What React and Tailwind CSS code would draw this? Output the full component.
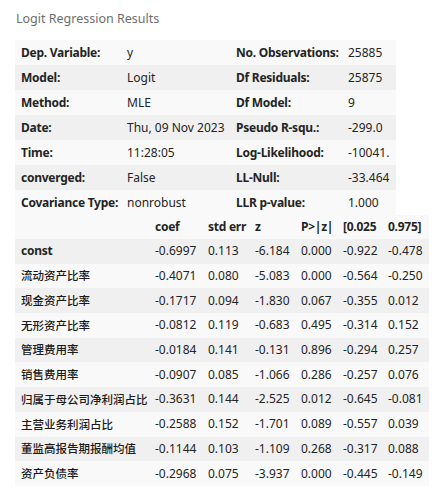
const summary = [
  ["Dep. Variable:", "y", "No. Observations:", "25885"],
  ["Model:", "Logit", "Df Residuals:", "25875"],
  ["Method:", "MLE", "Df Model:", "9"],
  ["Date:", "Thu, 09 Nov 2023", "Pseudo R-squ.:", "-299.0"],
  ["Time:", "11:28:05", "Log-Likelihood:", "-10041."],
  ["converged:", "False", "LL-Null:", "-33.464"],
  ["Covariance Type:", "nonrobust", "LLR p-value:", "1.000"],
];

const coefs = [
  ["const", "-0.6997", "0.113", "-6.184", "0.000", "-0.922", "-0.478"],
  ["流动资产比率", "-0.4071", "0.080", "-5.083", "0.000", "-0.564", "-0.250"],
  ["现金资产比率", "-0.1717", "0.094", "-1.830", "0.067", "-0.355", "0.012"],
  ["无形资产比率", "-0.0812", "0.119", "-0.683", "0.495", "-0.314", "0.152"],
  ["管理费用率", "-0.0184", "0.141", "-0.131", "0.896", "-0.294", "0.257"],
  ["销售费用率", "-0.0907", "0.085", "-1.066", "0.286", "-0.257", "0.076"],
  ["归属于母公司净利润占比", "-0.3631", "0.144", "-2.525", "0.012", "-0.645", "-0.081"],
  ["主营业务利润占比", "-0.2588", "0.152", "-1.701", "0.089", "-0.557", "0.039"],
  ["董监高报告期报酬均值", "-0.1144", "0.103", "-1.109", "0.268", "-0.317", "0.088"],
  ["资产负债率", "-0.2968", "0.075", "-3.937", "0.000", "-0.445", "-0.149"],
];

const headers = ["", "coef", "std err", "z", "P>|z|", "[0.025", "0.975]"];

export default function App() {
  return (
    <div
      className="min-h-screen bg-white pl-[15px] pt-[10px] text-[12px] text-[#242424]"
      style={{ fontFamily: '"Noto Sans", "Noto Sans CJK SC", sans-serif' }}
    >
      <div className="pl-px h-[30px] text-[12.5px] text-[#6e6e6e]">Logit Regression Results</div>

      {/* summary block */}
      <table className="table-fixed border-collapse w-[381px]">
        <colgroup>
          <col className="w-[106px]" />
          <col className="w-[109px]" />
          <col className="w-[112px]" />
          <col className="w-[54px]" />
        </colgroup>
        <tbody>
          {summary.map((r, i) => (
            <tr key={i} className={`h-[25px] ${i % 2 === 0 ? "bg-[#f9f9f9]" : "bg-[#f0f0f0]"}`}>
              <th className="pl-[6px] text-left font-bold tracking-[-0.25px] whitespace-nowrap">{r[0]}</th>
              <td className="pl-[6px] whitespace-nowrap">{r[1]}</td>
              <th className="pl-[6px] text-left font-bold tracking-[-0.25px] whitespace-nowrap">{r[2]}</th>
              <td className="pl-[6px] whitespace-nowrap">{r[3]}</td>
            </tr>
          ))}
        </tbody>
      </table>

      {/* coefficient block */}
      <table className="table-fixed border-collapse w-[414px]">
        <colgroup>
          <col className="w-[134px]" />
          <col className="w-[53px]" />
          <col className="w-[47px]" />
          <col className="w-[46px]" />
          <col className="w-[42px]" />
          <col className="w-[45px]" />
          <col className="w-[47px]" />
        </colgroup>
        <thead>
          <tr className="h-[24px] bg-[#f9f9f9]">
            {headers.map((h, i) => (
              <th key={i} className="pl-[6px] text-left font-bold tracking-[-0.25px] whitespace-nowrap">{h}</th>
            ))}
          </tr>
        </thead>
        <tbody>
          {coefs.map((r, i) => (
            <tr key={i} className={`h-[24.7px] ${i % 2 === 0 ? "bg-[#f0f0f0]" : "bg-[#f9f9f9]"}`}>
              {i === 0 ? (
                <th className="pl-[6px] text-left font-bold tracking-[-0.25px] whitespace-nowrap">{r[0]}</th>
              ) : (
                <th className="pl-[6px] text-left text-[11.5px] font-medium text-[#1a1a1a] whitespace-nowrap">{r[0]}</th>
              )}
              {r.slice(1).map((v, j) => (
                <td key={j} className="pl-[6px] whitespace-nowrap">{v}</td>
              ))}
            </tr>
          ))}
        </tbody>
      </table>
    </div>
  );
}
